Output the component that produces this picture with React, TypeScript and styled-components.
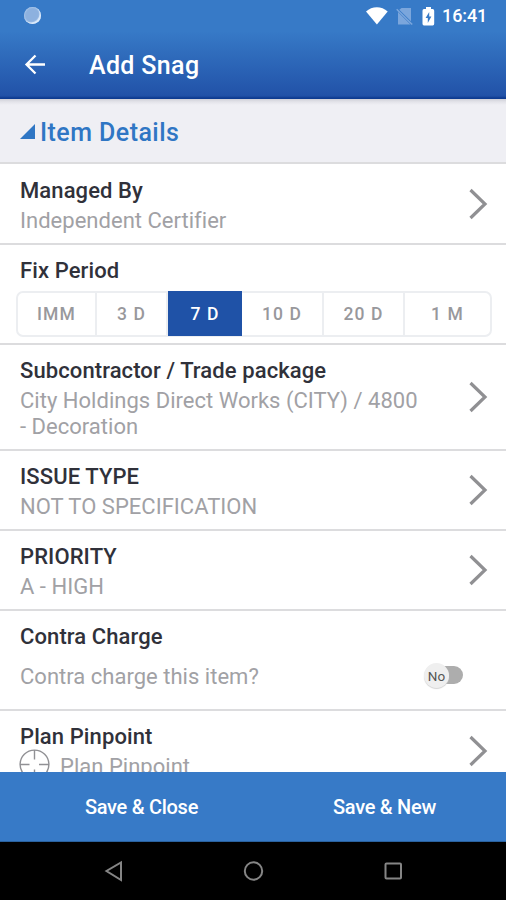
import React from 'react';
import styled, { createGlobalStyle } from 'styled-components';

const GlobalStyle = createGlobalStyle`
  * { box-sizing: border-box; }
  body { margin: 0; background: #fff; font-family: Roboto, "Liberation Sans", sans-serif; }
  button { font: inherit; border: 0; background: none; padding: 0; }
`;

const Screen = styled.div`
  width: 506px;
  height: 900px;
  display: flex;
  flex-direction: column;
  overflow: hidden;
`;

const Header = styled.header`
  flex: 0 0 99px;
  background: linear-gradient(#377ac7 0, #377ac7 31px, #2253a9 94px, #2050a6 96px, #0d3b91 98px);
  color: #fff;
`;

const StatusBar = styled.div`
  height: 32px;
  padding: 0 20px 0 24px;
  display: flex;
  align-items: center;
`;

const SyncDot = styled.span`
  width: 17px;
  height: 17px;
  margin: -2px auto 0 0;
  border-radius: 50%;
  background: #8db1df;
  box-shadow: inset -1.5px -1.5px 1px #dceafa, inset 0 0 1px 1px #a3c2e8;
`;

const StatusIcons = styled.svg`
  width: 72px;
  height: 22px;
  display: block;
  margin-top: -1px;
`;

const Clock = styled.span`
  width: 44px;
  margin-left: 4px;
  font-size: 18px;
  line-height: 32px;
  font-weight: 500;
  letter-spacing: -0.1px;
  white-space: nowrap;
`;

const TitleBar = styled.div`
  height: 66px;
  display: flex;
  align-items: center;
  padding-left: 24px;
`;

const BackButton = styled.button`
  width: 65px;
  height: 22px;
  display: flex;
`;

const ScreenTitle = styled.h1`
  margin: 2px 0 0;
  font-size: 25px;
  line-height: 32px;
  font-weight: 500;
  letter-spacing: 0.35px;
`;

const SectionHeader = styled.div`
  flex: 0 0 64px;
  display: flex;
  align-items: center;
  gap: 5px;
  padding: 3px 0 0 20px;
  background: linear-gradient(#cfd0d8 0, #e4e4ea 3px, #efeff4 6px);
  border-bottom: 1px solid #dcdcde;
  color: #2f76c4;
`;

const SectionTitle = styled.h2`
  margin: 0;
  font-size: 25px;
  font-weight: 500;
  letter-spacing: 0.45px;
`;

const Form = styled.main`
  flex: 1;
  min-height: 0;
  overflow: hidden;
`;

const Row = styled.section<{ $height: number }>`
  height: ${p => p.$height}px;
  display: flex;
  align-items: center;
  justify-content: space-between;
  padding: 0 18px 0 20px;
  border: solid #dcdcde;
  border-width: 1px 0;
  &:first-child { padding-top: 1px; }
`;

const StackedRow = styled(Row)`
  flex-direction: column;
  align-items: stretch;
  justify-content: flex-start;
`;

const Copy = styled.div`
  align-self: flex-start;
  width: 410px;
`;

const Label = styled.h3`
  margin: 11px 0 0;
  font-size: 22px;
  line-height: 30px;
  font-weight: 500;
  letter-spacing: 0.1px;
  color: #30313a;
  white-space: nowrap;
`;

const Value = styled.p`
  margin: 2px 0 0;
  font-size: 22px;
  line-height: 26px;
  letter-spacing: 0.02px;
  color: #a1a1a5;
  white-space: nowrap;
`;

const Segments = styled.div`
  display: flex;
  width: 476px;
  height: 46px;
  margin: 5px 0 0 -4px;
  border: 2px solid #eceef1;
  border-radius: 7px;
`;

const Segment = styled.button<{ $width: number; $active?: boolean }>`
  flex: 0 0 ${p => p.$width}px;
  height: ${p => (p.$active ? 45 : 42)}px;
  margin-top: ${p => (p.$active ? -2 : 0)}px;
  background: ${p => (p.$active ? '#1f52a7' : 'transparent')};
  color: ${p => (p.$active ? '#fff' : '#98989c')};
  font-size: 17.5px;
  font-weight: 500;
  letter-spacing: 1.1px;
  padding-top: ${p => (p.$active ? 1 : 0)}px;
  border-right: ${p => (p.$active ? 0 : 2)}px solid #eceef1;
  &:last-child { border-right: 0; }
`;

const SwitchLine = styled.div`
  display: flex;
  align-items: center;
  justify-content: space-between;
  height: 34px;
  padding-right: 25px;
  margin-top: 7px;
`;

const Track = styled.button`
  width: 36px;
  height: 18px;
  margin-top: -2px;
  border-radius: 9px;
  background: #adadad;
  display: flex;
  align-items: center;
`;

const Thumb = styled.span`
  flex: 0 0 25px;
  height: 25px;
  margin-left: -3px;
  border-radius: 50%;
  background: #efefef;
  box-shadow: 0 1px 1px #d4d4d4;
  color: #555;
  font-size: 13.5px;
  line-height: 26px;
  text-align: center;
`;

const PinLine = styled.div`
  display: flex;
  gap: 10px;
  margin-left: -1px;
`;

const PinIcon = styled.svg`
  flex: none;
  margin-top: -3px;
`;

const Footer = styled.footer`
  flex: 0 0 70px;
  display: flex;
  background: #377ac7;
  border-bottom: 1px solid #2a629f;
`;

const FooterAction = styled.button<{ $width: number }>`
  flex: 0 0 ${p => p.$width}px;
  padding-top: 1px;
  color: #fff;
  font-size: 20px;
  font-weight: 500;
  letter-spacing: -0.28px;
  white-space: nowrap;
`;

const NavBar = styled.nav`
  flex: 0 0 58px;
  background: #000;
  display: flex;
  justify-content: center;
`;

const Chevron = () => (
  <svg width="20" height="32" viewBox="0 0 20 32" fill="none" stroke="#909093" strokeWidth="3.2">
    <path d="M2.5 2 17 16 2.5 30" />
  </svg>
);

const periods = [
  { label: 'IMM', width: 79 },
  { label: '3 D', width: 71 },
  { label: '7 D', width: 74, active: true },
  { label: '10 D', width: 82 },
  { label: '20 D', width: 81 },
  { label: '1 M', width: 85 },
];

export default function App() {
  return (
    <Screen>
      <GlobalStyle />
      <Header>
        <StatusBar>
          <SyncDot />
          <StatusIcons viewBox="0 0 72 22">
            <path d="M0 6.5C6 .8 15.7.8 21.7 6.5L10.9 19.5Z" fill="#fff" />
            <path d="M35.5 3H45v13.3L33.3 4.7ZM32 7v12.5h12.5Z" fill="#7ba6dc" />
            <path d="m30.7 4.2 15.5 15.3" stroke="#7ba6dc" strokeWidth="1.5" />
            <path d="M60 2h5v2h1.6q1.6 0 1.6 1.8v13q0 1.7-1.5 1.7h-8.7q-1.5 0-1.5-1.7v-13Q56.5 4 58 4h2Z" fill="#fff" />
            <path d="m63.2 7-3.6 6h2.2v5l3.6-6.5h-2.2Z" fill="#377ac7" />
          </StatusIcons>
          <Clock>16:41</Clock>
        </StatusBar>
        <TitleBar>
          <BackButton aria-label="Back">
            <svg width="22" height="22" viewBox="0 0 22 22" fill="none" stroke="#fff" strokeWidth="2.3">
              <path d="M21 10.5H3M11.5 1.5l-9 9 9 9" />
            </svg>
          </BackButton>
          <ScreenTitle>Add Snag</ScreenTitle>
        </TitleBar>
      </Header>
      <SectionHeader>
        <svg width="15" height="16" viewBox="0 0 15 16">
          <path d="M15 0v15H0Z" fill="#2f76c4" />
        </svg>
        <SectionTitle>Item Details</SectionTitle>
      </SectionHeader>
      <Form>
        <Row $height={81}>
          <Copy>
            <Label>Managed By</Label>
            <Value>Independent Certifier</Value>
          </Copy>
          <Chevron />
        </Row>
        <StackedRow $height={100}>
          <Label>Fix Period</Label>
          <Segments>
            {periods.map(p => (
              <Segment key={p.label} $width={p.width} $active={p.active}>{p.label}</Segment>
            ))}
          </Segments>
        </StackedRow>
        <Row $height={106}>
          <Copy>
            <Label>Subcontractor / Trade package</Label>
            <Value>City Holdings Direct Works (CITY) / 4800<br />- Decoration</Value>
          </Copy>
          <Chevron />
        </Row>
        <Row $height={80}>
          <Copy>
            <Label>ISSUE TYPE</Label>
            <Value>NOT TO SPECIFICATION</Value>
          </Copy>
          <Chevron />
        </Row>
        <Row $height={80}>
          <Copy>
            <Label>PRIORITY</Label>
            <Value>A - HIGH</Value>
          </Copy>
          <Chevron />
        </Row>
        <StackedRow $height={100}>
          <Label>Contra Charge</Label>
          <SwitchLine>
            <Value>Contra charge this item?</Value>
            <Track role="switch" aria-checked="false"><Thumb>No</Thumb></Track>
          </SwitchLine>
        </StackedRow>
        <Row $height={81}>
          <Copy>
            <Label>Plan Pinpoint</Label>
            <PinLine>
              <PinIcon width="31" height="31" viewBox="0 0 31 31" fill="none" stroke="#909094" strokeWidth="1.4">
                <circle cx="15.5" cy="15.5" r="14.4" />
                <path d="M15.5 1v9.5M15.5 20.5V30M1 15.5h9.5M20 15.5h10" />
              </PinIcon>
              <Value>Plan Pinpoint</Value>
            </PinLine>
          </Copy>
          <Chevron />
        </Row>
      </Form>
      <Footer>
        <FooterAction $width={283}>Save &amp; Close</FooterAction>
        <FooterAction $width={203}>Save &amp; New</FooterAction>
      </Footer>
      <NavBar>
        <svg width="506" height="58" viewBox="0 0 506 58" fill="none" stroke="#858585" strokeWidth="2">
          <path d="M121 20.5v17.5L106.5 29Z" />
          <circle cx="253.5" cy="29" r="8.7" />
          <rect x="385.5" y="21.5" width="15.5" height="15" rx="1" />
        </svg>
      </NavBar>
    </Screen>
  );
}
